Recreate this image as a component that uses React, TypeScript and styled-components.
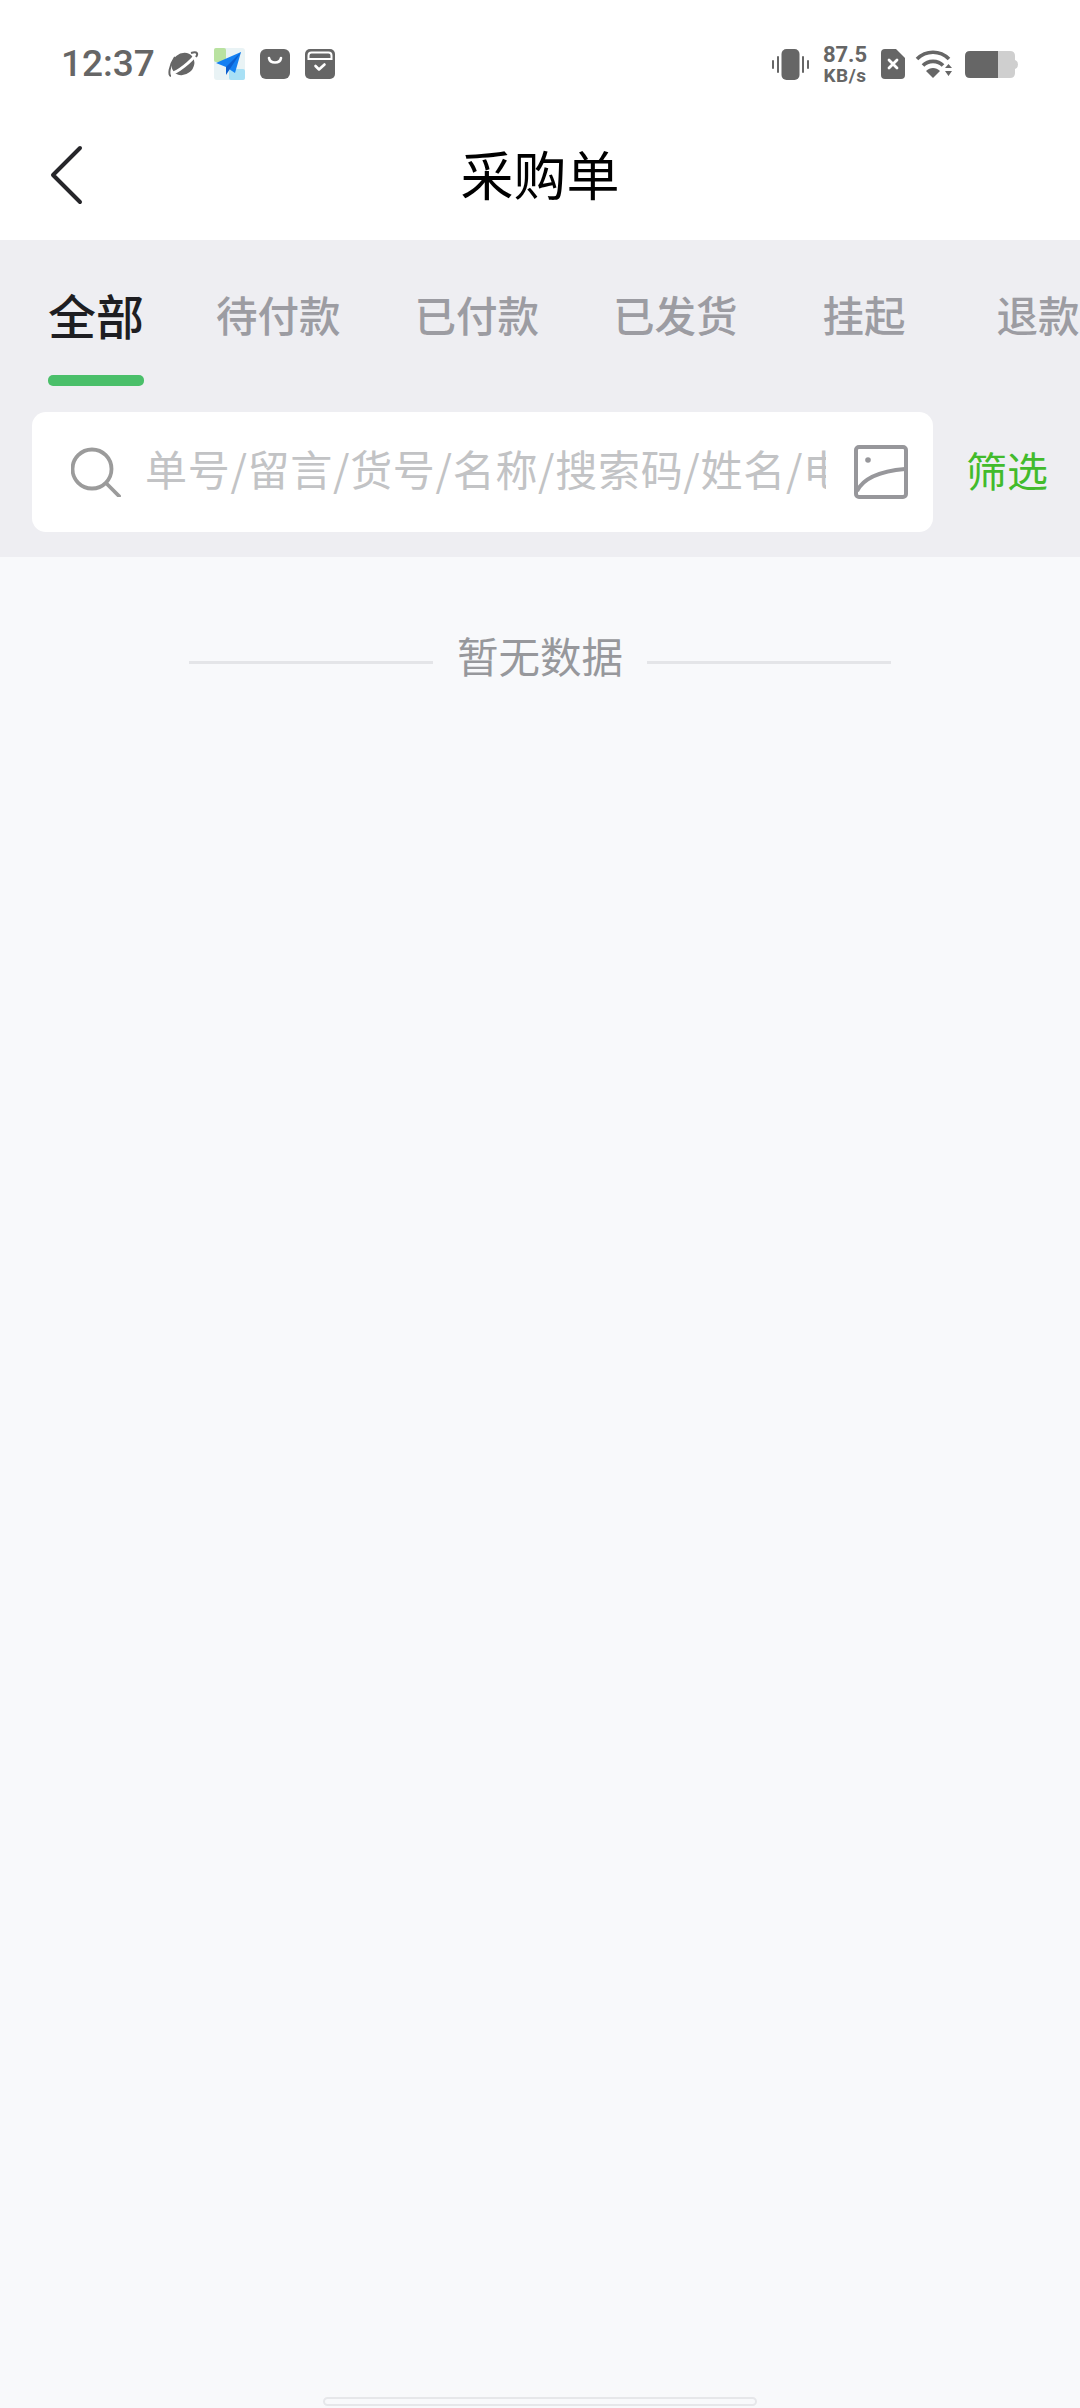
import React from "react";
import styled, { createGlobalStyle } from "styled-components";

const Global = createGlobalStyle`
  html, body { margin: 0; padding: 0; background: #f8f9fb; }
  * { box-sizing: border-box; }
  body { font-family: "Noto Sans CJK SC", "Noto Sans", sans-serif; }
`;

const Page = styled.div`
  width: 1080px;
  height: 2408px;
  display: flex;
  flex-direction: column;
  overflow: hidden;
  background: #f8f9fb;
`;

const StatusBar = styled.div`
  height: 110px;
  padding: 18px 62px 0 61px;
  background: #fff;
  display: flex;
  align-items: center;
  justify-content: space-between;
`;

const StatusGroup = styled.div<{ $gap: number }>`
  display: flex;
  align-items: center;
  gap: ${(p) => p.$gap}px;
`;

const Clock = styled.span`
  font-family: Roboto, sans-serif;
  font-size: 37px;
  font-weight: 500;
  color: #666;
  margin-right: -3px;
  line-height: 40px;
`;

const Speed = styled.div`
  display: flex;
  flex-direction: column;
  align-items: center;
  font-family: Roboto, sans-serif;
  font-weight: 700;
  color: #666;
  width: 46px;
`;

const SpeedValue = styled.span`
  font-size: 22px;
  line-height: 22px;
`;

const SpeedUnit = styled.span`
  font-size: 19px;
  line-height: 19px;
  letter-spacing: 0.5px;
`;

const SimSlot = styled.div`
  display: flex;
  margin-right: -3px;
`;

const NavBar = styled.div`
  height: 130px;
  background: #fff;
  position: relative;
  display: flex;
  align-items: center;
  justify-content: center;
`;

const BackButton = styled.div`
  position: absolute;
  left: 49px;
  top: 35px;
  width: 36px;
  height: 60px;
  display: flex;
`;

const Title = styled.h1`
  margin: -4px 0 0;
  font-size: 53px;
  font-weight: 400;
  color: #000;
  line-height: 70px;
`;

const Band = styled.div`
  height: 317px;
  background: #eeeef2;
  display: flex;
  flex-direction: column;
`;

const Tabs = styled.div`
  height: 146px;
  padding: 48px 0 0 48px;
  display: flex;
  overflow: hidden;
`;

const Tab = styled.div<{ $offset: number }>`
  flex-shrink: 0;
  margin-left: ${(p) => p.$offset}px;
  display: flex;
  flex-direction: column;
`;

const TabLabel = styled.span<{ $active?: boolean }>`
  height: 52px;
  line-height: 52px;
  white-space: nowrap;
  font-size: ${(p) => (p.$active ? 48 : 41.5)}px;
  font-weight: 500;
  color: ${(p) => (p.$active ? "#1e1e22" : "#9c9ca2")};
`;

const TabBar = styled.div`
  height: 11px;
  margin-top: 35px;
  border-radius: 5px;
  background: #4abf6a;
`;

const SearchRow = styled.div`
  margin-top: 26px;
  padding: 0 32px 0 32px;
  display: flex;
  align-items: center;
  justify-content: space-between;
`;

const SearchBox = styled.div`
  width: 901px;
  height: 120px;
  background: #fff;
  border-radius: 14px;
  padding: 0 25px 0 39px;
  display: flex;
  align-items: center;
`;

const Placeholder = styled.div`
  width: 681px;
  margin: -9px 0 0 24px;
  overflow: hidden;
  white-space: nowrap;
  font-size: 42px;
  letter-spacing: 0.7px;
  line-height: 56px;
  color: #c2c3c5;
`;

const ImageButton = styled.div`
  margin-left: 28px;
  display: flex;
`;

const Filter = styled.span`
  margin-top: -6px;
  font-size: 41px;
  line-height: 56px;
  color: #42bb2c;
`;

const Content = styled.div`
  flex: 1;
  display: flex;
  flex-direction: column;
  align-items: center;
`;

const Empty = styled.div`
  margin-top: 69px;
  display: flex;
  align-items: center;
  gap: 24px;
`;

const EmptyLine = styled.div`
  width: 244px;
  height: 3px;
  margin-top: 15px;
  background: #e4e5e8;
`;

const EmptyText = styled.span`
  font-size: 41.5px;
  line-height: 58px;
  color: #97989c;
`;

const HomeBar = styled.div`
  margin-top: auto;
  margin-bottom: 2px;
  width: 434px;
  height: 9px;
  border: 2px solid #e6e7ea;
  border-radius: 5px;
`;

const Planet = () => (
  <svg width="32" height="30" viewBox="0 0 32 30">
    <ellipse cx="16" cy="15" rx="10.5" ry="12" transform="rotate(50 16 15)" fill="#666" />
    <path d="M3 25 C 10 24, 25 12, 30 4" fill="none" stroke="#fff" strokeWidth="3" />
    <path d="M8 8 C 2 17 1 27 4 27 M24 4 C 31 2 31 5 29 8" fill="none" stroke="#666" strokeWidth="2" />
  </svg>
);

const Plane = () => (
  <svg width="31" height="32" viewBox="0 0 31 32">
    <rect x="0" y="0" width="31" height="32" rx="3" fill="#e9f3f5" />
    <rect x="0" y="0" width="12" height="14" rx="2" fill="#b9e2a0" />
    <rect x="15" y="21" width="16" height="11" rx="2" fill="#a8e0f5" />
    <path d="M2 15 L27 4 L21 25 L12 19 Z" fill="#1480f2" />
    <path d="M12 19 L27 4 L12 27 Z" fill="#0a5fd0" />
  </svg>
);

const Bag = () => (
  <svg width="30" height="30" viewBox="0 0 30 30">
    <rect width="30" height="30" rx="6" fill="#666" />
    <path d="M9 9 C 10 15, 20 15, 21 9" fill="none" stroke="#fff" strokeWidth="2.6" strokeLinecap="round" />
  </svg>
);

const Box = () => (
  <svg width="30" height="30" viewBox="0 0 30 30">
    <rect width="30" height="30" rx="5" fill="#666" />
    <path d="M3.5 10 V6.5 Q3.5 3.5 6.5 3.5 H23.5 Q26.5 3.5 26.5 6.5 V10 Z" fill="none" stroke="#fff" strokeWidth="2" />
    <path d="M10.5 17 L14 20.5 L19.5 15.5" fill="none" stroke="#fff" strokeWidth="2.6" strokeLinecap="round" strokeLinejoin="round" />
  </svg>
);

const Vibrate = () => (
  <svg width="37" height="31" viewBox="0 0 37 31">
    <rect x="9.5" y="0" width="18" height="31" rx="5" fill="#666" />
    <rect x="5" y="7" width="2" height="17" rx="1" fill="#666" />
    <rect x="0" y="11" width="2" height="9" rx="1" fill="#666" />
    <rect x="30" y="7" width="2" height="17" rx="1" fill="#666" />
    <rect x="35" y="11" width="2" height="9" rx="1" fill="#666" />
  </svg>
);

const Sim = () => (
  <svg width="24" height="30" viewBox="0 0 24 30">
    <path d="M4 0 H15 L24 9 V26 Q24 30 20 30 H4 Q0 30 0 26 V4 Q0 0 4 0 Z" fill="#666" />
    <path d="M8 11 L16 19 M16 11 L8 19" stroke="#fff" strokeWidth="2.8" strokeLinecap="round" />
  </svg>
);

const Wifi = () => (
  <svg width="37" height="29" viewBox="0 0 37 29">
    <path d="M2 9 C 11 0, 25 0, 34 9" fill="none" stroke="#666" strokeWidth="3.6" />
    <path d="M8 15.5 C 13 10, 23 10, 28 15.5" fill="none" stroke="#666" strokeWidth="3.6" />
    <path d="M11 22 L18 29 L25 22 C 21 18 15 18 11 22 Z" fill="#666" transform="translate(0 -1)" />
    <path d="M30 18 L33.5 14 L37 18 Z M30 21 H37 L33.5 26 Z" fill="#666" />
  </svg>
);

const Battery = () => (
  <svg width="53" height="27" viewBox="0 0 53 27">
    <path d="M32 0 H45 Q50 0 50 5 V22 Q50 27 45 27 H32 Z" fill="#cfcfcf" />
    <path d="M50 9 Q53 10 53 13.5 Q53 17 50 18 Z" fill="#cfcfcf" />
    <path d="M5 0 H33 V27 H5 Q0 27 0 22 V5 Q0 0 5 0 Z" fill="#666" />
  </svg>
);

const Chevron = () => (
  <svg width="36" height="60" viewBox="0 0 36 60">
    <path d="M31 3 L4 30 L31 57" fill="none" stroke="#26262a" strokeWidth="4" strokeLinecap="round" strokeLinejoin="round" />
  </svg>
);

const SearchIcon = () => (
  <svg width="50" height="50" viewBox="0 0 50 50">
    <circle cx="21" cy="22" r="19.5" fill="none" stroke="#9b9b9b" strokeWidth="3.8" />
    <path d="M36 37 L48 49" stroke="#9b9b9b" strokeWidth="3.8" strokeLinecap="round" />
  </svg>
);

const ImageIcon = () => (
  <svg width="54" height="54" viewBox="0 0 54 54">
    <rect x="2" y="2" width="50" height="50" rx="3" fill="none" stroke="#97979b" strokeWidth="4" />
    <circle cx="14" cy="15" r="2.8" fill="#97979b" />
    <path d="M3 46 C 10 32, 28 26, 51 24" fill="none" stroke="#97979b" strokeWidth="4" />
  </svg>
);

const tabs = [
  { label: "全部", offset: 0, active: true },
  { label: "待付款", offset: 72 },
  { label: "已付款", offset: 74 },
  { label: "已发货", offset: 74 },
  { label: "挂起", offset: 85 },
  { label: "退款", offset: 91 },
];

export default function App() {
  return (
    <Page>
      <Global />
      <StatusBar>
        <StatusGroup $gap={15}>
          <Clock>12:37</Clock>
          <Planet />
          <Plane />
          <Bag />
          <Box />
        </StatusGroup>
        <StatusGroup $gap={13}>
          <Vibrate />
          <Speed>
            <SpeedValue>87.5</SpeedValue>
            <SpeedUnit>KB/s</SpeedUnit>
          </Speed>
          <SimSlot>
            <Sim />
          </SimSlot>
          <Wifi />
          <Battery />
        </StatusGroup>
      </StatusBar>
      <NavBar>
        <BackButton>
          <Chevron />
        </BackButton>
        <Title>采购单</Title>
      </NavBar>
      <Band>
        <Tabs>
          {tabs.map((t) => (
            <Tab key={t.label} $offset={t.offset}>
              <TabLabel $active={t.active}>{t.label}</TabLabel>
              {t.active && <TabBar />}
            </Tab>
          ))}
        </Tabs>
        <SearchRow>
          <SearchBox>
            <SearchIcon />
            <Placeholder>单号/留言/货号/名称/搜索码/姓名/电话</Placeholder>
            <ImageButton>
              <ImageIcon />
            </ImageButton>
          </SearchBox>
          <Filter>筛选</Filter>
        </SearchRow>
      </Band>
      <Content>
        <Empty>
          <EmptyLine />
          <EmptyText>暂无数据</EmptyText>
          <EmptyLine />
        </Empty>
        <HomeBar />
      </Content>
    </Page>
  );
}
